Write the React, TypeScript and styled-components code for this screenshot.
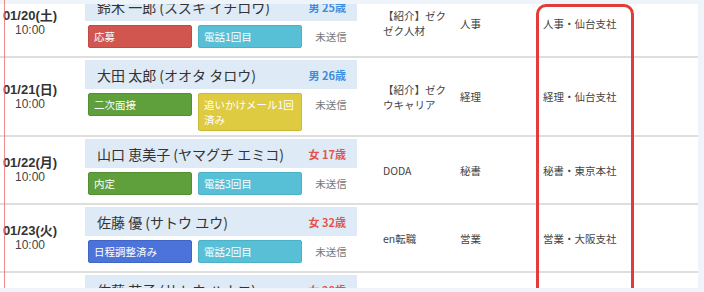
import React from "react";
import styled, { createGlobalStyle } from "styled-components";

const GlobalStyle = createGlobalStyle`
  html, body { margin: 0; padding: 0; background: #eef4fa; }
  body { font-family: "Noto Sans CJK JP", "Noto Sans", sans-serif; color: #333; }
`;

const Page = styled.div`
  position: relative;
  width: 704px;
  height: 292px;
  padding-top: 4px;
  box-sizing: border-box;
  overflow: hidden;
`;

const Guide = styled.div`
  position: absolute;
  left: 4px;
  top: 0;
  width: 1px;
  height: 288px;
  background: rgba(238, 110, 110, 0.8);
  z-index: 3;
`;

const Panel = styled.div`
  position: relative;
  width: 698px;
  height: 284px;
  background: #fff;
  overflow: hidden;
`;

const Highlight = styled.div`
  position: absolute;
  left: 536px;
  top: 0;
  width: 98px;
  height: 400px;
  box-sizing: border-box;
  border: 3px solid #e23c3a;
  border-radius: 10px;
  z-index: 2;
`;

const Table = styled.div`
  margin-top: -14px;
`;

const Row = styled.div`
  display: grid;
  grid-template-columns: 85px 272px 103px 83px 1fr;
  align-items: center;
  border-bottom: 2px solid #dedede;
`;

const DateCell = styled.div`
  padding-right: 25px;
  text-align: center;
  line-height: 15px;
  font-family: "Liberation Sans", "Noto Sans CJK JP", sans-serif;
`;

const DateText = styled.div`
  font-size: 13px;
  font-weight: 700;
  color: #333;
`;

const TimeText = styled.div`
  font-size: 12px;
  color: #444;
`;

const NameBlock = styled.div`
  padding-top: 2px;
  align-self: start;
`;

const NameHeader = styled.div`
  height: 29px;
  display: flex;
  align-items: center;
  justify-content: space-between;
  padding: 0 11px 0 12px;
  background: #deebf6;
`;

const Name = styled.span`
  font-size: 14px;
  color: #333;
  white-space: nowrap;
`;

const Age = styled.span<{ $female?: boolean }>`
  font-size: 11px;
  font-weight: 700;
  color: ${(p) => (p.$female ? "#e5534b" : "#3b8de0")};
`;

const TagsRow = styled.div`
  display: grid;
  grid-template-columns: 110px 110px 1fr;
  align-items: start;
  min-height: 35px;
  box-sizing: border-box;
  padding: 4px 0 4px;
`;

const tagColors: Record<string, [string, string]> = {
  red: ["#d15650", "#c24a45"],
  cyan: ["#58c0d6", "#4cb0c6"],
  green: ["#5f9f3c", "#548f34"],
  yellow: ["#dfcb41", "#cdb935"],
  blue: ["#4b73d9", "#3f65c6"],
};

const Tag = styled.div<{ $c: string }>`
  margin: 0 3px;
  padding: 3px 5px;
  border: 1px solid ${(p) => tagColors[p.$c][1]};
  border-radius: 2px;
  background: ${(p) => tagColors[p.$c][0]};
  color: #fff;
  font-size: 10.5px;
  line-height: 15px;
`;

const Status = styled.div`
  padding-top: 4px;
  text-align: center;
  font-size: 10.5px;
  line-height: 15px;
  color: #777;
`;

const TextCell = styled.div<{ $pl?: number }>`
  padding-left: ${(p) => p.$pl ?? 0}px;
  padding-right: 7px;
  font-size: 10.5px;
  line-height: 15px;
  color: #444;
`;

type Item = {
  date: string;
  name: string;
  age: string;
  female?: boolean;
  tags: [string, string][];
  media: string;
  job: string;
  branch: string;
};

const items: Item[] = [
  { date: "01/20(土)", name: "鈴木 一郎 (スズキ イチロウ)", age: "男 25歳", tags: [["応募", "red"], ["電話1回目", "cyan"]], media: "【紹介】ゼクゼク人材", job: "人事", branch: "人事・仙台支社" },
  { date: "01/21(日)", name: "大田 太郎 (オオタ タロウ)", age: "男 26歳", tags: [["二次面接", "green"], ["追いかけメール1回済み", "yellow"]], media: "【紹介】ゼクウキャリア", job: "経理", branch: "経理・仙台支社" },
  { date: "01/22(月)", name: "山口 恵美子 (ヤマグチ エミコ)", age: "女 17歳", female: true, tags: [["内定", "green"], ["電話3回目", "cyan"]], media: "DODA", job: "秘書", branch: "秘書・東京本社" },
  { date: "01/23(火)", name: "佐藤 優 (サトウ ユウ)", age: "女 32歳", female: true, tags: [["日程調整済み", "blue"], ["電話2回目", "cyan"]], media: "en転職", job: "営業", branch: "営業・大阪支社" },
  { date: "01/24(水)", name: "佐藤 花子 (サトウ ハナコ)", age: "女 28歳", female: true, tags: [["書類選考", "green"], ["電話1回目", "cyan"]], media: "マイナビ", job: "総務", branch: "総務・東京本社" },
];

export default function App() {
  return (
    <>
      <GlobalStyle />
      <Page>
        <Guide />
        <Panel>
          <Highlight />
          <Table>
            {items.map((it) => (
              <Row key={it.date}>
                <DateCell>
                  <DateText>{it.date}</DateText>
                  <TimeText>10:00</TimeText>
                </DateCell>
                <NameBlock>
                  <NameHeader>
                    <Name>{it.name}</Name>
                    <Age $female={it.female}>{it.age}</Age>
                  </NameHeader>
                  <TagsRow>
                    {it.tags.map(([t, c]) => (
                      <Tag key={t} $c={c}>{t}</Tag>
                    ))}
                    <Status>未送信</Status>
                  </TagsRow>
                </NameBlock>
                <TextCell $pl={26}>{it.media}</TextCell>
                <TextCell>{it.job}</TextCell>
                <TextCell>{it.branch}</TextCell>
              </Row>
            ))}
          </Table>
        </Panel>
      </Page>
    </>
  );
}
